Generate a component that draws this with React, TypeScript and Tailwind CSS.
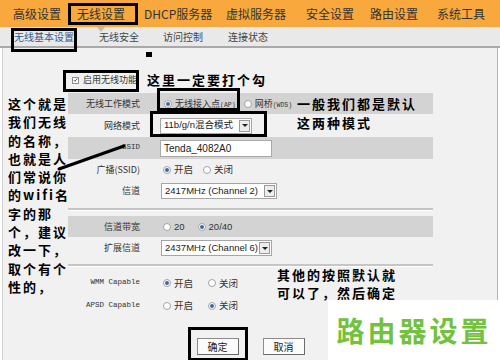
import type { ReactNode } from "react";

const navItems = [
  { label: "高级设置", w: "w-[64px]" },
  { label: "无线设置", w: "w-[67px]" },
  { label: "DHCP服务器", w: "w-[82px]" },
  { label: "虚拟服务器", w: "w-[80px]" },
  { label: "安全设置", w: "w-[64px]" },
  { label: "路由设置", w: "w-[67px]" },
  { label: "系统工具", w: "w-[60px]" },
];

const subTabs = [
  { label: "无线基本设置", w: "w-[85px]", active: true },
  { label: "无线安全", w: "w-[64px]" },
  { label: "访问控制", w: "w-[65px]" },
  { label: "连接状态", w: "w-[60px]" },
];

const leftNote = [
  "这个就是",
  "我们无线",
  "的名称，",
  "也就是人",
  "们常说你",
  "的wifi名",
  "字的那",
  "个，建议",
  "改一下，",
  "取个有个",
  "性的，",
];

function Radio({ checked }: { checked?: boolean }) {
  return (
    <span className="flex h-[8px] w-[8px] shrink-0 items-center justify-center rounded-full border border-[#a3a3a3] bg-white">
      {checked && <span className="h-[4px] w-[4px] rounded-full bg-[#3b6aa0]" />}
    </span>
  );
}

function Opt({ checked, children, className = "" }: { checked?: boolean; children: ReactNode; className?: string }) {
  return (
    <span className={`flex items-center gap-[3px] text-[9.5px] text-[#333] ${className}`}>
      <Radio checked={checked} />
      <span className="whitespace-nowrap">{children}</span>
    </span>
  );
}

function Select({ value, w }: { value: string; w: string }) {
  return (
    <div className={`flex h-[16px] items-center border border-[#a5a5a5] bg-white ${w}`}>
      <span className="flex-1 whitespace-nowrap pl-[3px] font-['Liberation_Sans','Noto_Sans_CJK_SC',sans-serif] text-[9.5px] text-[#222]">
        {value}
      </span>
      <span className="mr-[1px] flex h-[12px] w-[11px] items-center justify-center border border-[#9a9a9a] bg-[#ededed]">
        <span className="h-0 w-0 border-x-[3px] border-t-[3px] border-x-transparent border-t-[#222]" />
      </span>
    </div>
  );
}

function Row({ label, h, band, mono, children }: { label: string; h: string; band?: boolean; mono?: boolean; children?: ReactNode }) {
  return (
    <div className={`flex items-center ${h} ${band ? "bg-[#d3d3d3]" : ""}`}>
      <div
        className={`w-[80px] shrink-0 whitespace-nowrap pr-[8px] text-right text-[#333] ${
          mono ? "font-['Liberation_Mono',monospace] text-[7.5px]" : "text-[9px]"
        }`}
      >
        {label}
      </div>
      <div className="flex items-center pl-[12px]">{children}</div>
    </div>
  );
}

function Separator({ h }: { h: string }) {
  return (
    <div className={`flex items-center ${h}`}>
      <div className="w-full border-t-2 border-b border-t-[#c6c6c6] border-b-white" />
    </div>
  );
}

function Button({ children }: { children: ReactNode }) {
  return (
    <button className="flex h-[17px] w-[42px] items-center justify-center border border-[#8c8c8c] border-r-[#6a6a6a] border-b-[#6a6a6a] bg-[#fbfbfb] text-[10px] text-[#222]">
      {children}
    </button>
  );
}

const note = "font-['Noto_Sans_CJK_SC',sans-serif] font-bold text-[13px] tracking-[2px] text-black whitespace-nowrap";

export default function App() {
  return (
    <div className="relative h-[360px] w-[500px] overflow-hidden bg-white font-['Noto_Sans_CJK_SC','Liberation_Sans',sans-serif]">
      {/* top nav */}
      <div className="flex h-[27px] items-center bg-[#f8a83c] pl-[13px] text-[12px] text-[#333]">
        {navItems.map((n) => (
          <div key={n.label} className={`${n.w} shrink-0 whitespace-nowrap`}>
            {n.label}
          </div>
        ))}
      </div>

      {/* sub tabs */}
      <div className="relative flex h-[21px] items-center border-b-2 border-[#a9a9a9] bg-[#e9e9e9] pl-[14px] text-[10px] text-[#444]">
        <span className="absolute left-[97px] top-0 h-0 w-0 border-x-[4px] border-t-[5px] border-x-transparent border-t-[#bdbdbd]" />
        {subTabs.map((t) => (
          <div key={t.label} className={`${t.w} shrink-0 whitespace-nowrap ${t.active ? "text-[#2f5b95]" : ""}`}>
            {t.label}
          </div>
        ))}
      </div>

      {/* content */}
      <div className="ml-[2px] flex h-[312px] w-[496px] border-x border-l-[#d2d2d2] border-r-[#b4b4b4] bg-[#f1f1f1]">
        <div className="ml-[65px] flex w-[365px] flex-col pt-[21px]">
          <div className="flex h-[22px] items-center pl-[4px]">
            <span className="flex h-[7px] w-[7px] items-center justify-center border border-[#8f8f8f] bg-white">
              <svg viewBox="0 0 8 8" className="h-[6px] w-[6px]">
                <path d="M1.2 4.2 L3.2 6.2 L6.8 1.6" fill="none" stroke="#333" strokeWidth="1.3" />
              </svg>
            </span>
            <span className="ml-[4px] whitespace-nowrap text-[9px] text-[#333]">启用无线功能</span>
          </div>
          <div className="h-[2px]" />
          <Row label="无线工作模式" h="h-[21px]" band>
            <Opt checked className="ml-[4px] !text-[9px]">
              无线接入点<span className="font-['Liberation_Mono',monospace] text-[6.5px]">(AP)</span>
            </Opt>
            <Opt className="ml-[8px] !text-[9px]">
              网桥<span className="font-['Liberation_Mono',monospace] text-[6.5px]">(WDS)</span>
            </Opt>
          </Row>
          <Row label="网络模式" h="h-[23px]">
            <Select value="11b/g/n混合模式" w="w-[92px]" />
          </Row>
          <Row label="SSID" h="h-[22px]" band mono>
            <div className="flex h-[17px] w-[112px] items-center border border-[#a9a9a9] bg-white pl-[3px] font-['Liberation_Sans',sans-serif] text-[10px] text-[#222]">
              Tenda_4082A0
            </div>
          </Row>
          <Row label="广播(SSID)" h="h-[21px]">
            <Opt checked className="ml-[3px]">开启</Opt>
            <Opt className="ml-[10px]">关闭</Opt>
          </Row>
          <Row label="信道" h="h-[22px]">
            <div className="ml-[1px]">
              <Select value="2417MHz (Channel 2)" w="w-[116px]" />
            </div>
          </Row>
          <Separator h="h-[14px]" />
          <Row label="信道带宽" h="h-[21px]" band>
            <Opt className="ml-[3px]">
              <span className="font-['Liberation_Sans',sans-serif]">20</span>
            </Opt>
            <Opt checked className="ml-[13px]">
              <span className="font-['Liberation_Sans',sans-serif]">20/40</span>
            </Opt>
          </Row>
          <Row label="扩展信道" h="h-[22px]">
            <div className="ml-[1px]">
              <Select value="2437MHz (Channel 6)" w="w-[111px]" />
            </div>
          </Row>
          <Separator h="h-[13px]" />
          <Row label="WMM Capable" h="h-[22px]" mono>
            <Opt checked className="ml-[3px]">开启</Opt>
            <Opt className="ml-[15px]">关闭</Opt>
          </Row>
          <Row label="APSD Capable" h="h-[23px]" mono>
            <Opt className="ml-[3px]">开启</Opt>
            <Opt checked className="ml-[15px]">关闭</Opt>
          </Row>
          <div className="flex justify-center gap-[24px] pt-[21px]">
            <Button>确定</Button>
            <Button>取消</Button>
          </div>
        </div>
      </div>

      {/* annotation layer drawn over the screenshot */}
      <div className="absolute left-[68px] top-[3px] h-[22px] w-[70px] border-[3px] border-black" />
      <div className="absolute left-[11px] top-[28px] h-[24px] w-[66px] border-[3px] border-black" />
      <div className="absolute left-[146px] top-[52px] h-[5px] w-[6px] bg-black" />
      <div className="absolute left-[63px] top-[70px] h-[22px] w-[76px] border-[3px] border-black" />
      <div className="absolute left-[157px] top-[88px] h-[23px] w-[83px] border-[3px] border-black" />
      <div className="absolute left-[150px] top-[111px] h-[26px] w-[117px] border-[3px] border-black" />
      <div className="absolute left-[188px] top-[327px] h-[34px] w-[60px] border-[3px] border-black" />

      <svg className="absolute left-0 top-0 h-[360px] w-[500px]" viewBox="0 0 500 360">
        <path d="M59 169 L124 146" stroke="#000" strokeWidth="3" strokeLinecap="round" />
      </svg>

      <div className={`absolute left-[147px] top-[71px] leading-[18px] ${note}`}>这里一定要打个勾</div>
      <div className={`absolute left-[297px] top-[94px] leading-[19px] ${note}`}>
        <div>一般我们都是默认</div>
        <div>这两种模式</div>
      </div>
      <div className={`absolute left-[8px] top-[95px] leading-[18.3px] ${note}`}>
        {leftNote.map((l) => (
          <div key={l}>{l}</div>
        ))}
      </div>
      <div className={`absolute left-[277px] top-[266px] leading-[18px] ${note}`}>
        <div>其他的按照默认就</div>
        <div>可以了，然后确定</div>
      </div>

      <div className="absolute left-[328px] top-[300px] flex h-[60px] w-[172px] items-center justify-center bg-white">
        <span className="whitespace-nowrap font-['Noto_Sans_CJK_SC',sans-serif] text-[28px] font-bold tracking-[3px] text-[#72c23e]">
          路由器设置
        </span>
      </div>
    </div>
  );
}
